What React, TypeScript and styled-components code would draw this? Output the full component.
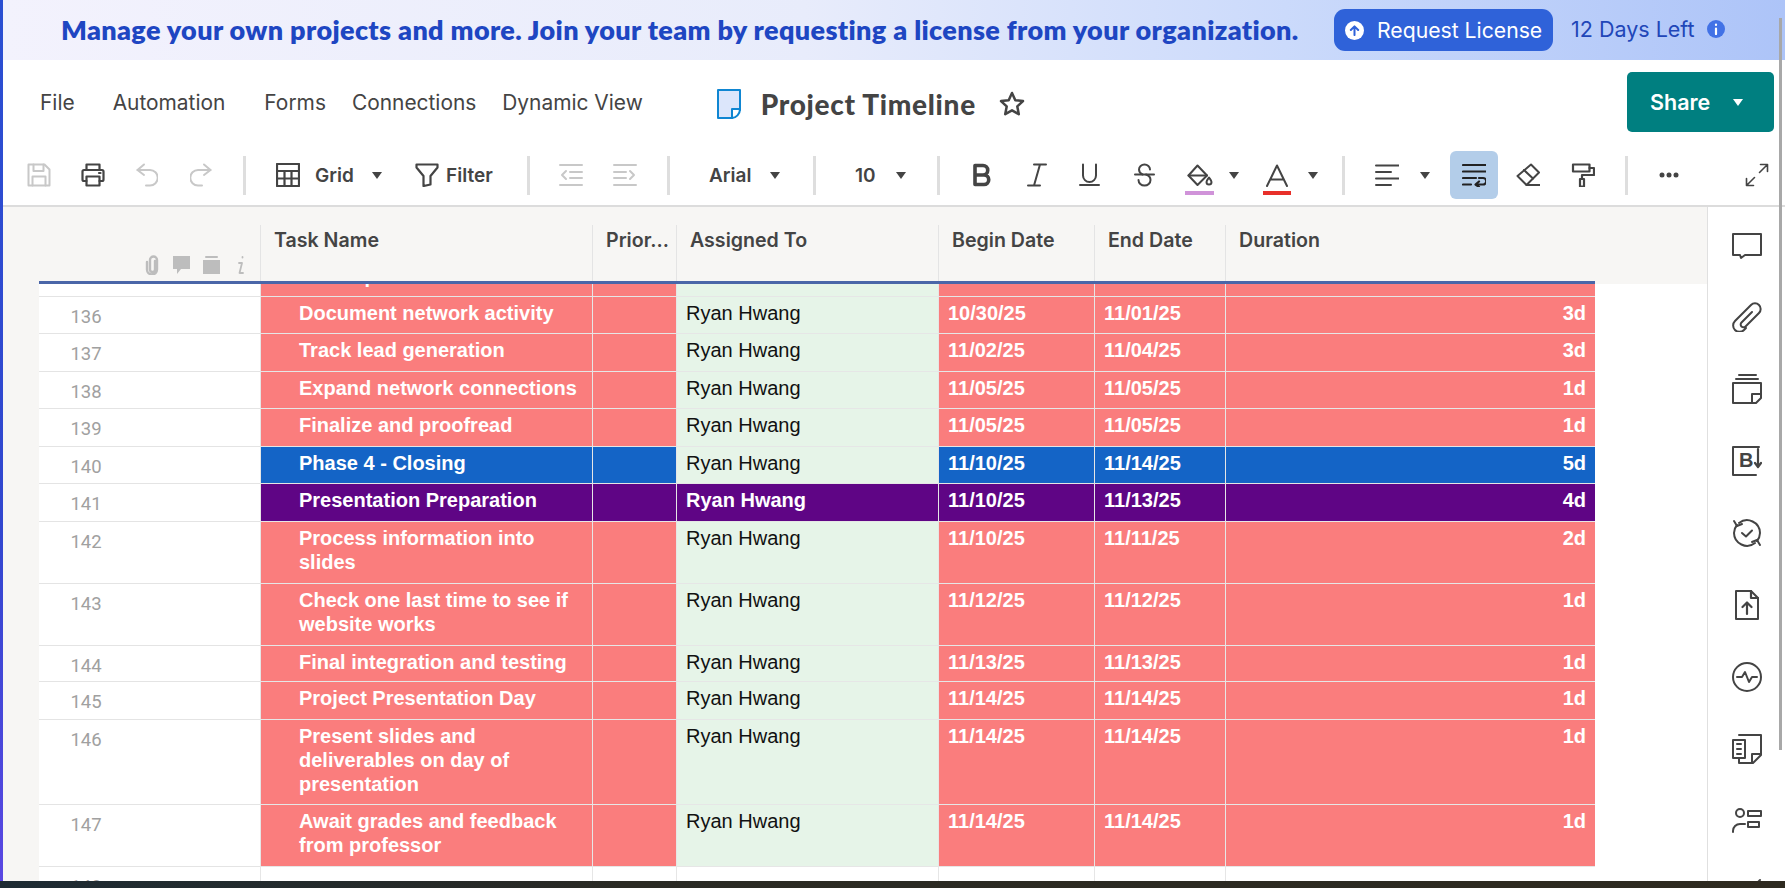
import styled, { createGlobalStyle } from "styled-components";

const GlobalStyle = createGlobalStyle`
  html, body {
    margin: 0;
    padding: 0;
    height: 100%;
    overflow: hidden;
    background: #fff;
  }
  * { box-sizing: border-box; }
`;

const Page = styled.div`
  position: relative;
  width: 1785px;
  height: 888px;
  display: flex;
  flex-direction: column;
  overflow: hidden;
  font-family: Inter, "Liberation Sans", sans-serif;
`;

const Top = styled.div`
  display: flex;
  height: 881px;
`;

const SideStrip = styled.div`
  width: 3px;
  background: linear-gradient(180deg, #2b4fd2 0%, #3247cf 60%, #5a48e2 100%);
`;

const Main = styled.div`
  flex: 1;
  min-width: 0;
  display: flex;
  flex-direction: column;
`;

const Taskbar = styled.div`
  height: 7px;
  background: linear-gradient(90deg, #1d2b33 0%, #2a2a24 35%, #2e2a20 100%);
`;

const PageScroll = styled.div`
  position: absolute;
  top: 18px;
  right: 3px;
  width: 3px;
  height: 732px;
  background: #a8a8a8;
`;

const Banner = styled.div`
  height: 60px;
  display: flex;
  align-items: center;
  padding-left: 58px;
  background: linear-gradient(90deg, #f3f2fd 0%, #e8ecfb 45%, #cbdafb 72%, #adc4f8 100%);
`;

const BannerText = styled.div`
  width: 1273px;
  flex: none;
  font-family: Lato, sans-serif;
  font-weight: 800;
  font-size: 27px;
  letter-spacing: 0.35px;
  color: #1e46c2;
  white-space: nowrap;
  padding-bottom: 1px;
`;

const RequestButton = styled.div`
  flex: none;
  width: 219px;
  height: 42px;
  border-radius: 11px;
  background: #2f62d9;
  color: #fff;
  display: flex;
  align-items: center;
  padding-left: 11px;
  gap: 13px;
  font-size: 21.2px;
`;

const UpCircle = styled.span`
  width: 19px;
  height: 19px;
  border-radius: 50%;
  background: #fff;
  color: #2f62d9;
  display: flex;
  align-items: center;
  justify-content: center;
`;

const DaysLeft = styled.div`
  margin-left: 18px;
  margin-bottom: 3px;
  font-size: 21.5px;
  color: #2146b8;
  display: flex;
  align-items: center;
  gap: 12px;
  white-space: nowrap;
`;

const InfoDot = styled.span`
  width: 18px;
  height: 18px;
  border-radius: 50%;
  background: #4272e6;
  color: #fff;
  display: flex;
  align-items: center;
  justify-content: center;
`;

const MenuRow = styled.div`
  height: 81px;
  display: flex;
  align-items: center;
  padding: 3px 11px 0 37px;
`;

const MenuItem = styled.div<{ $ml?: number }>`
  margin-left: ${(p) => p.$ml ?? 0}px;
  font-size: 20.9px;
  color: #444;
  white-space: nowrap;
`;

const TitleBlock = styled.div`
  margin-left: 74px;
  margin-top: 3px;
  display: flex;
  align-items: center;
  color: #444;
`;

const Title = styled.div`
  margin: 0 24px 0 20px;
  font-family: Lato, sans-serif;
  font-weight: 900;
  font-size: 28px;
  letter-spacing: 0.7px;
  color: #444;
  width: 214px;
  white-space: nowrap;
`;

const ShareButton = styled.div`
  margin-left: auto;
  width: 147px;
  height: 60px;
  border-radius: 5px;
  background: #007f80;
  color: #fff;
  font-size: 21.5px;
  font-weight: 600;
  display: flex;
  align-items: center;
  padding-left: 23px;
  gap: 23px;
`;

const Caret = styled.span<{ $ml?: number; $white?: boolean }>`
  flex: none;
  margin-left: ${(p) => p.$ml ?? 0}px;
  width: 0;
  height: 0;
  border-left: 5px solid transparent;
  border-right: 5px solid transparent;
  border-top: 7px solid ${(p) => (p.$white ? "#fff" : "#444")};
`;

const Toolbar = styled.div`
  height: 66px;
  display: flex;
  align-items: center;
  border-bottom: 2px solid #dcdcdc;
  padding-top: 4px;
`;

const ToolSep = styled.span<{ $ml: number }>`
  flex: none;
  margin-left: ${(p) => p.$ml}px;
  width: 3px;
  height: 39px;
  background: #dedede;
`;

const ToolIcon = styled.span<{ $ml: number; $w?: number; $muted?: boolean }>`
  flex: none;
  margin-left: ${(p) => p.$ml}px;
  width: ${(p) => p.$w ?? 24}px;
  height: 24px;
  display: flex;
  align-items: center;
  justify-content: center;
  color: ${(p) => (p.$muted ? "#c8c8c8" : "#444")};
`;

const ToolText = styled.span<{ $ml: number; $w: number }>`
  flex: none;
  margin-left: ${(p) => p.$ml}px;
  width: ${(p) => p.$w}px;
  font-size: 19px;
  font-weight: 600;
  color: #444;
  white-space: nowrap;
`;

const SwatchIcon = styled.span<{ $ml: number; $w: number }>`
  flex: none;
  margin-left: ${(p) => p.$ml}px;
  width: ${(p) => p.$w}px;
  margin-top: 8px;
  display: flex;
  flex-direction: column;
  align-items: center;
  gap: 3px;
  color: #444;
`;

const Swatch = styled.span<{ $color: string }>`
  width: 100%;
  height: 4px;
  background: ${(p) => p.$color};
`;

const ActiveTool = styled.span<{ $ml: number }>`
  flex: none;
  margin-left: ${(p) => p.$ml}px;
  width: 48px;
  height: 48px;
  border-radius: 6px;
  background: #b3cde9;
  color: #222;
  display: flex;
  align-items: center;
  justify-content: center;
`;

const Ico = styled.svg<{ $sw?: number }>`
  display: block;
  fill: none;
  stroke: currentColor;
  stroke-width: ${(p) => p.$sw ?? 2};
  stroke-linecap: round;
  stroke-linejoin: round;
  flex: none;
`;

const Work = styled.div`
  flex: 1;
  min-height: 0;
  display: flex;
`;

const Sheet = styled.div`
  flex: 1;
  min-width: 0;
  display: flex;
  flex-direction: column;
`;

const COLUMNS = "221px 332px 84px 262px 156px 131px 370px";

const HeaderBand = styled.div`
  height: 77px;
  padding: 18px 0 0 36px;
  background: #f7f6f4;
`;

const HeaderGrid = styled.div`
  width: 1556px;
  height: 59px;
  display: grid;
  grid-template-columns: ${COLUMNS};
  border-bottom: 3px solid #4a66a8;
`;

const HeaderCell = styled.div`
  padding: 5px 0 0 13px;
  border-left: 1px solid #e4e4e4;
  font-size: 19.6px;
  line-height: 20px;
  font-weight: 600;
  color: #444;
  white-space: nowrap;
`;

const RowIconsCell = styled.div`
  display: flex;
  justify-content: flex-end;
  align-items: flex-end;
  gap: 11px;
  padding: 0 15px 6px 0;
  color: #bdbdbd;
`;

const InfoGlyph = styled.span`
  margin-left: 5px;
`;

const Body = styled.div`
  flex: 1;
  min-height: 0;
  display: flex;
  overflow: hidden;
`;

const Gutter = styled.div`
  width: 36px;
  background: #f7f6f4;
`;

const Rows = styled.div`
  width: 1556px;
  margin-top: -24px;
`;

type Kind = "red" | "blue" | "purple";

const KIND_BG: Record<Kind, string> = {
  red: "#fa7d7d",
  blue: "#1464c6",
  purple: "#5f0585",
};

const Row = styled.div<{ $h: number }>`
  display: grid;
  grid-template-columns: ${COLUMNS};
  height: ${(p) => p.$h}px;
`;

const NumCell = styled.div`
  background: #fff;
  border-bottom: 1px solid #e4e4e4;
  padding: 10px 127px 0 0;
  text-align: center;
  font-family: Roboto, sans-serif;
  font-size: 18.5px;
  line-height: 20px;
  color: #a0a0a0;
`;

const Cell = styled.div<{ $bg: string; $right?: boolean; $indent?: boolean; $color?: string; $regular?: boolean }>`
  background: ${(p) => p.$bg};
  color: ${(p) => p.$color ?? "#fff"};
  border-bottom: 1px solid #e6e6e6;
  border-left: 1px solid #e6e6e6;
  padding: 4px 9px 0 ${(p) => (p.$indent ? 38 : 9)}px;
  font-family: "Liberation Sans", Arial, sans-serif;
  font-size: 20px;
  font-weight: ${(p) => (p.$regular ? 400 : 700)};
  line-height: 24px;
  text-align: ${(p) => (p.$right ? "right" : "left")};
  overflow: hidden;
`;

const SidePanel = styled.div`
  width: 78px;
  border-left: 1px solid #e0e0e0;
  padding: 23px 0 0 1px;
  display: flex;
  flex-direction: column;
  align-items: center;
  gap: 42px;
  overflow: hidden;
  color: #444;
`;

type RowData = {
  num: string;
  h: number;
  task: string;
  kind: Kind;
  begin: string;
  end: string;
  dur: string;
  owner?: string;
  strongOwner?: boolean;
};

const ROWS: RowData[] = [
  { num: "136", h: 37, task: "Document network activity", kind: "red", begin: "10/30/25", end: "11/01/25", dur: "3d" },
  { num: "137", h: 38, task: "Track lead generation", kind: "red", begin: "11/02/25", end: "11/04/25", dur: "3d" },
  { num: "138", h: 37, task: "Expand network connections", kind: "red", begin: "11/05/25", end: "11/05/25", dur: "1d" },
  { num: "139", h: 38, task: "Finalize and proofread", kind: "red", begin: "11/05/25", end: "11/05/25", dur: "1d" },
  { num: "140", h: 37, task: "Phase 4 - Closing", kind: "blue", begin: "11/10/25", end: "11/14/25", dur: "5d" },
  { num: "141", h: 38, task: "Presentation Preparation", kind: "purple", begin: "11/10/25", end: "11/13/25", dur: "4d", strongOwner: true },
  { num: "142", h: 62, task: "Process information into slides", kind: "red", begin: "11/10/25", end: "11/11/25", dur: "2d" },
  { num: "143", h: 62, task: "Check one last time to see if website works", kind: "red", begin: "11/12/25", end: "11/12/25", dur: "1d" },
  { num: "144", h: 36, task: "Final integration and testing", kind: "red", begin: "11/13/25", end: "11/13/25", dur: "1d" },
  { num: "145", h: 38, task: "Project Presentation Day", kind: "red", begin: "11/14/25", end: "11/14/25", dur: "1d" },
  { num: "146", h: 85, task: "Present slides and deliverables on day of presentation", kind: "red", begin: "11/14/25", end: "11/14/25", dur: "1d" },
  { num: "147", h: 62, task: "Await grades and feedback from professor", kind: "red", begin: "11/14/25", end: "11/14/25", dur: "1d" },
];

function SheetRow({ row }: { row: RowData }) {
  const bg = KIND_BG[row.kind];
  const owner = row.owner ?? "Ryan Hwang";
  return (
    <Row $h={row.h}>
      <NumCell>{row.num}</NumCell>
      <Cell $bg={bg} $indent>{row.task}</Cell>
      <Cell $bg={bg} />
      {row.strongOwner ? (
        <Cell $bg={bg}>{owner}</Cell>
      ) : (
        <Cell $bg="#e6f4e8" $color="#111" $regular>{owner}</Cell>
      )}
      <Cell $bg={bg}>{row.begin}</Cell>
      <Cell $bg={bg}>{row.end}</Cell>
      <Cell $bg={bg} $right>{row.dur}</Cell>
    </Row>
  );
}

const SaveIcon = () => (
  <Ico width="24" height="24" viewBox="0 0 24 24">
    <path d="M1.5 1.5h16l5 5v16h-21z" />
    <path d="M6.5 1.5v6.5h10V1.5M5.5 22.5v-9h13v9" />
  </Ico>
);
const PrintIcon = () => (
  <Ico width="24" height="24" viewBox="0 0 24 24" $sw={2.2}>
    <path d="M5.500 7V1.500h13V7" />
    <path d="M5.500 18H3a1.500 1.500 0 0 1-1.500-1.500v-8A1.500 1.500 0 0 1 3 7h18a1.500 1.500 0 0 1 1.500 1.500v8A1.500 1.500 0 0 1 21 18h-2.500" />
    <path d="M5.500 13.500h13v9h-13z" />
    <path d="M18 10h1.500" />
  </Ico>
);
const UndoIcon = () => (
  <Ico width="22" height="24" viewBox="0 0 22 24">
    <path d="M8 1.500 1.500 7 8 12" />
    <path d="M1.500 7H14a7 7 0 0 1 0 15.500h-4" />
  </Ico>
);
const RedoIcon = () => (
  <Ico width="22" height="24" viewBox="0 0 22 24">
    <path d="M14 1.500 20.500 7 14 12" />
    <path d="M20.500 7H8a7 7 0 0 0 0 15.500h4" />
  </Ico>
);
const GridIcon = () => (
  <Ico width="24" height="24" viewBox="0 0 24 24" $sw={2.2}>
    <path d="M1 1h22v22H1z" />
    <path d="M1 8h22M1 15.500h22M8.500 8v15M15.500 8v15" />
  </Ico>
);
const FilterIcon = () => (
  <Ico width="24" height="24" viewBox="0 0 24 24" $sw={2.2}>
    <path d="M1.500 1.500h21v3L15.500 13v8.500l-7 1.500v-10L1.500 4.500z" />
  </Ico>
);
const IndentIcon = ({ flip }: { flip?: boolean }) => (
  <Ico width="24" height="24" viewBox="0 0 24 24" style={flip ? { transform: "scaleX(-1)" } : undefined}>
    <path d="M1 2h22M1 22h22M11 9h12M11 15h12" />
    <path d="M7 8l-4 4 4 4" />
  </Ico>
);
const BoldIcon = () => (
  <Ico width="20" height="24" viewBox="0 0 20 24" $sw={3.6}>
    <path d="M3 2.500h8a4.500 4.500 0 0 1 0 9.500H3zM3 12h9a4.700 4.700 0 0 1 0 9.500H3z" />
  </Ico>
);
const ItalicIcon = () => (
  <Ico width="20" height="24" viewBox="0 0 20 24">
    <path d="M7 1.500h12M1 22.500h12M13 1.500 7 22.500" />
  </Ico>
);
const UnderlineIcon = () => (
  <Ico width="21" height="24" viewBox="0 0 21 24">
    <path d="M4 1.500v11a6.500 6.500 0 0 0 13 0v-11M1 22h19" />
  </Ico>
);
const StrikeIcon = () => (
  <Ico width="21" height="24" viewBox="0 0 21 24">
    <path d="M1 11.500h19" />
    <path d="M16 6.500a5.500 5 0 0 0-11 0c0 2 1 3.800 3.500 5" />
    <path d="M12 11.500c3 1 4.500 3 4.500 5.500a6 5.500 0 0 1-12 0" />
  </Ico>
);
const FillIcon = () => (
  <Ico width="26" height="24" viewBox="0 0 26 24">
    <path d="M10.500 1.500 20 11.500l-9.500 9.500L1.500 11.500z" />
    <path d="M1.500 11.500H20" />
    <path d="M24.500 18a2.500 2.500 0 0 1-5 0c0-1.500 1.500-3 2.500-4.500 1 1.500 2.500 3 2.500 4.500z" />
  </Ico>
);
const LetterAIcon = () => (
  <Ico width="24" height="24" viewBox="0 0 24 24">
    <path d="M2 22 12 1.500 22 22M5.500 15.500h13" />
  </Ico>
);
const AlignIcon = () => (
  <Ico width="24" height="24" viewBox="0 0 24 24">
    <path d="M1 2.500h23M1 9h15M1 15.500h23M1 22h15" />
  </Ico>
);
const WrapIcon = () => (
  <Ico width="24" height="24" viewBox="0 0 24 24" $sw={2.2}>
    <path d="M1 2h23M1 8.500h23M1 15h13M1 21.500h8" />
    <path d="M17 15h4a3 3 0 0 1 0 6.500h-7M17 18.500 13.500 21.500l3.500 2.500" />
  </Ico>
);
const EraserIcon = () => (
  <Ico width="24" height="24" viewBox="0 0 24 24">
    <path d="M15 1.500 23 9.500 10.500 22 1.500 13z" />
    <path d="M8 7l9 8.500M10.500 22H24" />
  </Ico>
);
const RollerIcon = () => (
  <Ico width="24" height="24" viewBox="0 0 24 24" $sw={2.2}>
    <path d="M2 1.500h16.500v7H2z" />
    <path d="M18.500 5H23v7H11v4" />
    <path d="M9 16h4v7.500H9z" />
  </Ico>
);
const MoreIcon = () => (
  <Ico width="20" height="24" viewBox="0 0 20 24">
    <circle cx="3" cy="12" r="2.500" fill="currentColor" stroke="none" />
    <circle cx="10" cy="12" r="2.500" fill="currentColor" stroke="none" />
    <circle cx="17" cy="12" r="2.500" fill="currentColor" stroke="none" />
  </Ico>
);
const ExpandIcon = () => (
  <Ico width="24" height="24" viewBox="0 0 24 24" $sw={1.6}>
    <path d="M15.500 1.500h7v7M22.500 1.500 14.500 9.500M8.500 22.500h-7v-7M1.500 22.500l8-8" />
  </Ico>
);
const StarIcon = () => (
  <Ico width="26" height="26" viewBox="0 0 26 26" $sw={2.5}>
    <path d="M13 2l3.300 7.200 7.700.9-5.700 5.300 1.500 7.800L13 19.300l-6.800 3.900 1.500-7.800L2 10.100l7.700-.9z" />
  </Ico>
);
const DocIcon = () => (
  <svg width="24" height="30" viewBox="0 0 24 30" style={{ display: "block" }}>
    <path d="M1 1h22v20l-8 8H1z" fill="#dce6fb" stroke="#0f86d2" strokeWidth="2" strokeLinejoin="round" />
    <path d="M23 20h-8v9c4 0 8-4 8-9z" fill="#fff" stroke="#0f86d2" strokeWidth="2" strokeLinejoin="round" />
  </svg>
);

const SIDE_ICONS = [
  <Ico key="comment" width="30" height="30" viewBox="0 0 30 30">
    <path d="M1 4h28v21H13l-4 3-1-3H1z" />
  </Ico>,
  <Ico key="clip" width="30" height="30" viewBox="0 0 30 30">
    <path d="M20 10 9.500 20.500a2.800 2.800 0 0 0 4 4L27 11a5.500 5.500 0 0 0-8-8L3 19a6 6 0 0 0 9 9l2-2" />
  </Ico>,
  <Ico key="cards" width="30" height="30" viewBox="0 0 30 30">
    <path d="M7 1h17M4 5h22" />
    <path d="M1 9h28v15l-5 5H1z" />
    <path d="M29 20h-9v9" />
  </Ico>,
  <Ico key="bridge" width="30" height="30" viewBox="0 0 30 30">
    <path d="M27 1H1v28h23" />
    <text x="7" y="21" fontFamily="Liberation Sans, sans-serif" fontWeight="700" fontSize="20" fill="currentColor" stroke="none">B</text>
    <path d="M26 3v17M23 17l3 4 3-4" strokeWidth="2.200" />
  </Ico>,
  <Ico key="sync" width="30" height="30" viewBox="0 0 30 30">
    <path d="M7 5a13 13 0 0 1 21 10 13 13 0 0 1-3 8M23 25a13 13 0 0 1-21-10 13 13 0 0 1 3-8" />
    <path d="M2 3l3 5 5-2M28 27l-3-5-5 2M10 15l4 3.500 6-6" />
  </Ico>,
  <Ico key="upload" width="30" height="30" viewBox="0 0 30 30">
    <path d="M4 1h15l7 7v21H4z" />
    <path d="M19 1v7h7M15 24V13M10.500 17 15 12.500l4.500 4.500" strokeWidth="2.200" />
  </Ico>,
  <Ico key="activity" width="30" height="30" viewBox="0 0 30 30">
    <circle cx="15" cy="15" r="14" />
    <path d="M5 15h5l3-5 4 10 3-5h5" />
  </Ico>,
  <Ico key="summary" width="30" height="30" viewBox="0 0 30 30">
    <path d="M7 1h22v20l-8 8H7v-4" />
    <path d="M29 20h-9v9" />
    <path d="M1 6h12v18H1zM5 10h4M5 15h4M5 20h4" />
  </Ico>,
  <Ico key="people" width="30" height="30" viewBox="0 0 30 30">
    <circle cx="8" cy="7" r="4" />
    <path d="M1 26v-1a7 7 0 0 1 7-7h5M16 5h13v5H16zM16 16h11v5H16z" />
  </Ico>,
  <Ico key="edit" width="30" height="30" viewBox="0 0 30 30">
    <path d="M28 2 16 14" />
  </Ico>,
];

export default function App() {
  return (
    <Page>
      <GlobalStyle />
      <Top>
        <SideStrip />
        <Main>
          <Banner>
            <BannerText>Manage your own projects and more. Join your team by requesting a license from your organization.</BannerText>
            <RequestButton>
              <UpCircle>
                <Ico width="11" height="11" viewBox="0 0 12 12" $sw={2.2}>
                  <path d="M6 11V2M2 5.500 6 1.500l4 4" />
                </Ico>
              </UpCircle>
              Request License
            </RequestButton>
            <DaysLeft>
              12 Days Left
              <InfoDot>
                <Ico width="10" height="12" viewBox="0 0 10 12" $sw={2.2}>
                  <path d="M5 5.500V11M5 1.500v.5" />
                </Ico>
              </InfoDot>
            </DaysLeft>
          </Banner>

          <MenuRow>
            <MenuItem>File</MenuItem>
            <MenuItem $ml={38}>Automation</MenuItem>
            <MenuItem $ml={39}>Forms</MenuItem>
            <MenuItem $ml={26}>Connections</MenuItem>
            <MenuItem $ml={26}>Dynamic View</MenuItem>
            <TitleBlock>
              <DocIcon />
              <Title>Project Timeline</Title>
              <StarIcon />
            </TitleBlock>
            <ShareButton>
              Share
              <Caret $white />
            </ShareButton>
          </MenuRow>

          <Toolbar>
            <ToolIcon $ml={24} $muted><SaveIcon /></ToolIcon>
            <ToolIcon $ml={30}><PrintIcon /></ToolIcon>
            <ToolIcon $ml={31} $w={22} $muted><UndoIcon /></ToolIcon>
            <ToolIcon $ml={32} $w={22} $muted><RedoIcon /></ToolIcon>
            <ToolSep $ml={31} />
            <ToolIcon $ml={30}><GridIcon /></ToolIcon>
            <ToolText $ml={15} $w={39}>Grid</ToolText>
            <Caret $ml={18} />
            <ToolIcon $ml={33}><FilterIcon /></ToolIcon>
            <ToolText $ml={7} $w={47}>Filter</ToolText>
            <ToolSep $ml={34} />
            <ToolIcon $ml={29} $muted><IndentIcon /></ToolIcon>
            <ToolIcon $ml={30} $muted><IndentIcon flip /></ToolIcon>
            <ToolSep $ml={30} />
            <ToolText $ml={39} $w={43}>Arial</ToolText>
            <Caret $ml={18} />
            <ToolSep $ml={33} />
            <ToolText $ml={39} $w={21}>10</ToolText>
            <Caret $ml={20} />
            <ToolSep $ml={31} />
            <ToolIcon $ml={33} $w={18}><BoldIcon /></ToolIcon>
            <ToolIcon $ml={36} $w={20}><ItalicIcon /></ToolIcon>
            <ToolIcon $ml={32} $w={21}><UnderlineIcon /></ToolIcon>
            <ToolIcon $ml={34} $w={21}><StrikeIcon /></ToolIcon>
            <SwatchIcon $ml={30} $w={29}><FillIcon /><Swatch $color="#d093d9" /></SwatchIcon>
            <Caret $ml={15} />
            <SwatchIcon $ml={24} $w={28}><LetterAIcon /><Swatch $color="#e8302a" /></SwatchIcon>
            <Caret $ml={17} />
            <ToolSep $ml={24} />
            <ToolIcon $ml={30}><AlignIcon /></ToolIcon>
            <Caret $ml={21} />
            <ActiveTool $ml={20}><WrapIcon /></ActiveTool>
            <ToolIcon $ml={18}><EraserIcon /></ToolIcon>
            <ToolIcon $ml={31}><RollerIcon /></ToolIcon>
            <ToolSep $ml={30} />
            <ToolIcon $ml={31} $w={20}><MoreIcon /></ToolIcon>
            <ToolIcon $ml={66}><ExpandIcon /></ToolIcon>
          </Toolbar>

          <Work>
            <Sheet>
              <HeaderBand>
                <HeaderGrid>
                  <RowIconsCell>
                    <Ico width="18" height="20" viewBox="0 0 18 20" $sw={2.4}>
                      <path d="M12 6v8.500a2.500 2.500 0 0 1-5 0V5a3.500 3.500 0 0 1 7 0v9.500a5 5 0 0 1-10 0V7" />
                    </Ico>
                    <Ico width="19" height="20" viewBox="0 0 19 20">
                      <path d="M1 1h17v13H9l-4 5v-5H1z" fill="currentColor" stroke="none" />
                    </Ico>
                    <Ico width="19" height="20" viewBox="0 0 19 20">
                      <path d="M4 2h11" />
                      <path d="M1 5h17v14H1z" fill="currentColor" stroke="none" />
                    </Ico>
                    <InfoGlyph>
                      <Ico width="8" height="20" viewBox="0 0 8 20" $sw={1.8}>
                        <path d="M5.500 2v.5M2 8h3l-2.500 10H6" />
                      </Ico>
                    </InfoGlyph>
                  </RowIconsCell>
                  <HeaderCell>Task Name</HeaderCell>
                  <HeaderCell>Prior…</HeaderCell>
                  <HeaderCell>Assigned To</HeaderCell>
                  <HeaderCell>Begin Date</HeaderCell>
                  <HeaderCell>End Date</HeaderCell>
                  <HeaderCell>Duration</HeaderCell>
                </HeaderGrid>
              </HeaderBand>
              <Body>
                <Gutter />
                <Rows>
                  <SheetRow row={{ num: "", h: 37, task: "Develop", kind: "red", begin: "", end: "", dur: "", owner: "" }} />
                  {ROWS.map((row) => (
                    <SheetRow key={row.num} row={row} />
                  ))}
                  <Row $h={37}>
                    <NumCell>148</NumCell>
                    <Cell $bg="#fff" />
                    <Cell $bg="#fff" />
                    <Cell $bg="#fff" />
                    <Cell $bg="#fff" />
                    <Cell $bg="#fff" />
                    <Cell $bg="#fff" />
                  </Row>
                </Rows>
              </Body>
            </Sheet>
            <SidePanel>{SIDE_ICONS}</SidePanel>
          </Work>
        </Main>
      </Top>
      <Taskbar />
      <PageScroll />
    </Page>
  );
}
